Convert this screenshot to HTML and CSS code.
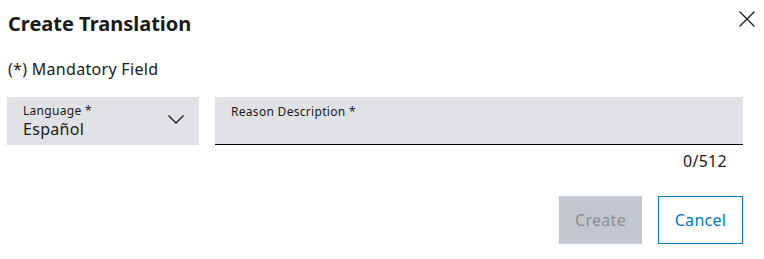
FILE: index.html
```html
<!DOCTYPE html>
<html lang="en">
<head>
<meta charset="utf-8">
<title>Create Translation</title>
<link rel="stylesheet" href="styles.css">
</head>
<body>
<div class="dialog">
  <div class="header">
    <h1 class="title">Create Translation</h1>
    <button class="close" aria-label="Close">
      <svg width="16" height="16" viewBox="0 0 16 16"><path d="M0.5 0.5 L15.5 15.5 M15.5 0.5 L0.5 15.5" stroke="#1a1a1a" stroke-width="1.3" fill="none"/></svg>
    </button>
  </div>
  <p class="mandatory">(*) Mandatory Field</p>
  <div class="fields">
    <div class="select">
      <div class="select-text">
        <span class="label">Language *</span>
        <span class="value">Español</span>
      </div>
      <svg class="chevron" width="16" height="9" viewBox="0 0 16 9"><path d="M0.5 0.5 L8 8 L15.5 0.5" stroke="#1a1a1a" stroke-width="1.3" fill="none"/></svg>
    </div>
    <div class="textarea">
      <span class="label">Reason Description *</span>
    </div>
  </div>
  <div class="counter">0/512</div>
  <div class="actions">
    <button class="btn btn-primary" disabled>Create</button>
    <button class="btn btn-secondary">Cancel</button>
  </div>
</div>
</body>
</html>
```
FILE: styles.css
```css
* { box-sizing: border-box; }
html, body { margin: 0; padding: 0; background: #fff; }
body { font-family: "Noto Sans", Roboto, sans-serif; color: #000; letter-spacing: 0.3px; }
.dialog { padding: 12px 21px 0 7px; width: 764px; }
.header { display: flex; justify-content: space-between; align-items: flex-start; margin-right: -12px; }
.title { margin: 0 0 0 1px; font-size: 20px; line-height: 24px; font-weight: 700; color: #1a1a1a; letter-spacing: 0; }
.close { border: 0; background: none; padding: 0; margin-top: -1px; width: 16px; height: 16px; display: block; }
.close svg { display: block; }
.mandatory { margin: 21px 0 0 1px; font-size: 16px; line-height: 24px; color: #1a1a1a; }
.fields { display: flex; gap: 16px; margin-top: 16px; }
.select { width: 192px; height: 48px; background: #e0e2e5; display: flex; align-items: center; justify-content: space-between; padding: 0 15px 0 16px; }
.select-text { display: flex; flex-direction: column; margin-top: 0; }
.label { font-size: 12px; line-height: 16px; color: #1a1a1a; }
.value { font-size: 16px; line-height: 21px; color: #1a1a1a; }
.chevron { display: block; margin-top: -3px; }
.textarea { flex: 1; height: 48px; background: #e0e2e5; border-bottom: 1px solid #000; padding: 2px 16px 0 16px; }
.counter { text-align: right; padding-right: 16px; font-size: 16px; line-height: 24px; margin-top: 4px; color: #1a1a1a; }
.actions { display: flex; justify-content: flex-end; gap: 16px; margin-top: 23px; }
.btn { height: 48px; font-family: inherit; font-size: 16px; letter-spacing: 0.3px; padding: 0 10px; border: 1px solid transparent; background: none; }
.btn-primary { width: 83px; background: #c1c7cc; color: #8a9097; border-color: #c1c7cc; }
.btn-secondary { width: 85px; border-color: #007bc0; color: #007bc0; background: #fff; }
```
